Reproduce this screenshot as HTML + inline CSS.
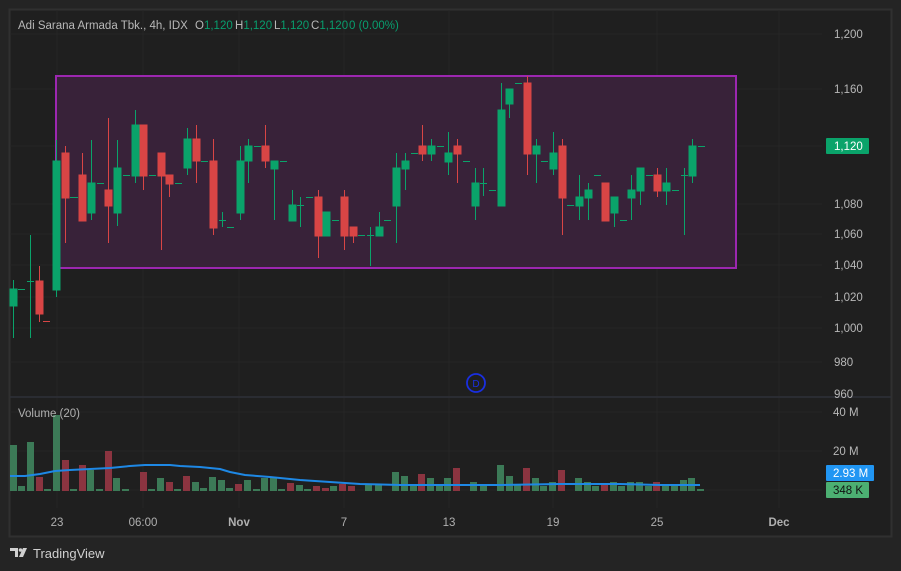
<!DOCTYPE html>
<html><head><meta charset="utf-8"><style>
html,body{margin:0;padding:0;background:#232323;width:901px;height:571px;overflow:hidden;font-family:"Liberation Sans",sans-serif}
svg{position:absolute;left:0;top:0}
</style></head><body>
<svg width="901" height="571" viewBox="0 0 901 571" font-family="Liberation Sans, sans-serif">
<rect x="0" y="0" width="901" height="571" fill="#242424"/>
<rect x="9.5" y="9.5" width="882" height="527" fill="#1f1f1f" stroke="#303030" stroke-width="2"/>
<!-- grid -->
<g stroke="#262626" stroke-width="1">
<line x1="10" y1="34" x2="822" y2="34"/><line x1="10" y1="89" x2="822" y2="89"/><line x1="10" y1="146" x2="822" y2="146"/>
<line x1="10" y1="204" x2="822" y2="204"/><line x1="10" y1="234" x2="822" y2="234"/><line x1="10" y1="265" x2="822" y2="265"/>
<line x1="10" y1="297" x2="822" y2="297"/><line x1="10" y1="328" x2="822" y2="328"/><line x1="10" y1="362" x2="822" y2="362"/>
<line x1="10" y1="412" x2="822" y2="412"/><line x1="10" y1="451" x2="822" y2="451"/><line x1="10" y1="490" x2="822" y2="490"/>
<line x1="57" y1="10" x2="57" y2="508"/><line x1="143" y1="10" x2="143" y2="508"/><line x1="239" y1="10" x2="239" y2="508"/>
<line x1="344" y1="10" x2="344" y2="508"/><line x1="449" y1="10" x2="449" y2="508"/><line x1="553" y1="10" x2="553" y2="508"/>
<line x1="657" y1="10" x2="657" y2="508"/><line x1="779" y1="10" x2="779" y2="508"/>
</g>
<line x1="10" y1="397" x2="891" y2="397" stroke="#2e3038" stroke-width="1.5"/>
<!-- rectangle -->
<rect x="56" y="76" width="680" height="192" fill="#382239" stroke="#9c27b0" stroke-width="2"/>
<!-- header -->
<g font-size="11.5" fill="#b8b8b8">
<text x="18" y="29">Adi Sarana Armada Tbk., 4h, IDX</text>
<text x="195" y="29">O<tspan fill="#089e6e">1,120</tspan></text>
<text x="235" y="29">H<tspan fill="#089e6e">1,120</tspan></text>
<text x="274" y="29">L<tspan fill="#089e6e">1,120</tspan></text>
<text x="311" y="29">C<tspan fill="#089e6e">1,120</tspan></text>
<text x="349" y="29" fill="#089e6e">0 (0.00%)</text>
</g>
<!-- candles -->
<g stroke-width="1">
<g fill="#0aa36a" stroke="#0aa36a">
<line x1="13.5" y1="280" x2="13.5" y2="338"/><rect x="10" y="289" width="7" height="17"/>
<line x1="18" y1="289.5" x2="25" y2="289.5"/>
<line x1="30.5" y1="235" x2="30.5" y2="338"/><line x1="27" y1="281.5" x2="34" y2="281.5"/>
<line x1="56.5" y1="140" x2="56.5" y2="297"/><rect x="53" y="161" width="7" height="129"/>
<line x1="70" y1="197.5" x2="78" y2="197.5"/>
<line x1="91.5" y1="140" x2="91.5" y2="220"/><rect x="88" y="183" width="7" height="30"/>
<line x1="97" y1="183.5" x2="104" y2="183.5"/>
<line x1="117.5" y1="140" x2="117.5" y2="226"/><rect x="114" y="168" width="7" height="45"/>
<line x1="123" y1="175.5" x2="130" y2="175.5"/>
<line x1="135.5" y1="110" x2="135.5" y2="183"/><rect x="132" y="125" width="7" height="51"/>
<line x1="149" y1="175.5" x2="156" y2="175.5"/>
<line x1="175" y1="183.5" x2="182" y2="183.5"/>
<line x1="187.5" y1="128" x2="187.5" y2="175"/><rect x="184" y="139" width="7" height="29"/>
<line x1="201" y1="161.5" x2="208" y2="161.5"/>
<line x1="222.5" y1="212" x2="222.5" y2="227"/><line x1="219" y1="220.5" x2="226" y2="220.5"/>
<line x1="227" y1="227.5" x2="234" y2="227.5"/>
<line x1="240.5" y1="146" x2="240.5" y2="220"/><rect x="237" y="161" width="7" height="52"/>
<line x1="248.5" y1="139" x2="248.5" y2="183"/><rect x="245" y="146" width="7" height="15"/>
<line x1="254" y1="146.5" x2="261" y2="146.5"/>
<line x1="274.5" y1="161" x2="274.5" y2="220"/><rect x="271" y="161" width="7" height="8"/>
<line x1="280" y1="161.5" x2="287" y2="161.5"/>
<line x1="292.5" y1="190" x2="292.5" y2="221"/><rect x="289" y="205" width="7" height="16"/>
<line x1="300.5" y1="197" x2="300.5" y2="227"/><line x1="297" y1="205.5" x2="304" y2="205.5"/>
<line x1="306" y1="197.5" x2="313" y2="197.5"/>
<line x1="326.5" y1="212" x2="326.5" y2="236"/><rect x="323" y="212" width="7" height="24"/>
<line x1="332" y1="220.5" x2="339" y2="220.5"/>
<line x1="358" y1="235.5" x2="365" y2="235.5"/>
<line x1="370.5" y1="227" x2="370.5" y2="266"/><line x1="367" y1="235.5" x2="374" y2="235.5"/>
<line x1="379.5" y1="212" x2="379.5" y2="236"/><rect x="376" y="227" width="7" height="9"/>
<line x1="384" y1="220.5" x2="391" y2="220.5"/>
<line x1="396.5" y1="153" x2="396.5" y2="243"/><rect x="393" y="168" width="7" height="38"/>
<line x1="405.5" y1="153" x2="405.5" y2="190"/><rect x="402" y="161" width="7" height="8"/>
<line x1="411" y1="153.5" x2="418" y2="153.5"/>
<line x1="431.5" y1="139" x2="431.5" y2="161"/><rect x="428" y="146" width="7" height="8"/>
<line x1="437" y1="146.5" x2="444" y2="146.5"/>
<line x1="448.5" y1="132" x2="448.5" y2="175"/><rect x="445" y="153" width="7" height="9"/>
<line x1="463" y1="161.5" x2="470" y2="161.5"/>
<line x1="475.5" y1="168" x2="475.5" y2="220"/><rect x="472" y="183" width="7" height="23"/>
<line x1="483.5" y1="168" x2="483.5" y2="196"/><line x1="480" y1="183.5" x2="487" y2="183.5"/>
<line x1="489" y1="190.5" x2="496" y2="190.5"/>
<line x1="501.5" y1="83" x2="501.5" y2="206"/><rect x="498" y="110" width="7" height="96"/>
<line x1="509.5" y1="89" x2="509.5" y2="118"/><rect x="506" y="89" width="7" height="15"/>
<line x1="515" y1="83.5" x2="522" y2="83.5"/>
<line x1="536.5" y1="139" x2="536.5" y2="183"/><rect x="533" y="146" width="7" height="8"/>
<line x1="541" y1="161.5" x2="548" y2="161.5"/>
<line x1="553.5" y1="132" x2="553.5" y2="175"/><rect x="550" y="153" width="7" height="16"/>
<line x1="567" y1="205.5" x2="574" y2="205.5"/>
<line x1="579.5" y1="175" x2="579.5" y2="220"/><rect x="576" y="197" width="7" height="9"/>
<line x1="588.5" y1="183" x2="588.5" y2="220"/><rect x="585" y="190" width="7" height="8"/>
<line x1="594" y1="175.5" x2="601" y2="175.5"/>
<line x1="614.5" y1="197" x2="614.5" y2="227"/><rect x="611" y="197" width="7" height="16"/>
<line x1="620" y1="220.5" x2="627" y2="220.5"/>
<line x1="631.5" y1="175" x2="631.5" y2="220"/><rect x="628" y="190" width="7" height="8"/>
<line x1="640.5" y1="168" x2="640.5" y2="205"/><rect x="637" y="168" width="7" height="23"/>
<line x1="646" y1="175.5" x2="653" y2="175.5"/>
<line x1="666.5" y1="168" x2="666.5" y2="205"/><rect x="663" y="183" width="7" height="8"/>
<line x1="672" y1="190.5" x2="679" y2="190.5"/>
<line x1="684.5" y1="168" x2="684.5" y2="235"/><line x1="681" y1="175.5" x2="688" y2="175.5"/>
<line x1="692.5" y1="139" x2="692.5" y2="183"/><rect x="689" y="146" width="7" height="30"/>
<line x1="698" y1="146.5" x2="705" y2="146.5"/>
</g>
<g fill="#d84545" stroke="#d84545">
<line x1="39.5" y1="266" x2="39.5" y2="322"/><rect x="36" y="281" width="7" height="33"/>
<line x1="43" y1="321.5" x2="50" y2="321.5"/>
<line x1="65.5" y1="146" x2="65.5" y2="243"/><rect x="62" y="153" width="7" height="45"/>
<line x1="82.5" y1="153" x2="82.5" y2="221"/><rect x="79" y="175" width="7" height="46"/>
<line x1="108.5" y1="118" x2="108.5" y2="243"/><rect x="105" y="190" width="7" height="16"/>
<line x1="143.5" y1="125" x2="143.5" y2="190"/><rect x="140" y="125" width="7" height="51"/>
<line x1="161.5" y1="153" x2="161.5" y2="250"/><rect x="158" y="153" width="7" height="23"/>
<line x1="169.5" y1="175" x2="169.5" y2="197"/><rect x="166" y="175" width="7" height="9"/>
<line x1="196.5" y1="125" x2="196.5" y2="183"/><rect x="193" y="139" width="7" height="22"/>
<line x1="213.5" y1="139" x2="213.5" y2="235"/><rect x="210" y="161" width="7" height="67"/>
<line x1="265.5" y1="125" x2="265.5" y2="168"/><rect x="262" y="146" width="7" height="15"/>
<line x1="318.5" y1="190" x2="318.5" y2="258"/><rect x="315" y="197" width="7" height="39"/>
<line x1="344.5" y1="190" x2="344.5" y2="250"/><rect x="341" y="197" width="7" height="39"/>
<line x1="353.5" y1="227" x2="353.5" y2="243"/><rect x="350" y="227" width="7" height="9"/>
<line x1="422.5" y1="125" x2="422.5" y2="161"/><rect x="419" y="146" width="7" height="8"/>
<line x1="457.5" y1="139" x2="457.5" y2="183"/><rect x="454" y="146" width="7" height="8"/>
<line x1="527.5" y1="76" x2="527.5" y2="175"/><rect x="524" y="83" width="7" height="71"/>
<line x1="562.5" y1="139" x2="562.5" y2="235"/><rect x="559" y="146" width="7" height="52"/>
<line x1="605.5" y1="183" x2="605.5" y2="221"/><rect x="602" y="183" width="7" height="38"/>
<line x1="657.5" y1="168" x2="657.5" y2="197"/><rect x="654" y="175" width="7" height="16"/>
</g>
</g>
<circle cx="476" cy="383" r="9" fill="none" stroke="#1a2fe0" stroke-width="1.8"/>
<text x="476" y="387" font-size="10" fill="#1a2fe0" text-anchor="middle">D</text>
<!-- volume -->
<g fill="#3c7a57">
<rect x="10" y="445" width="7" height="46"/><rect x="18" y="486" width="7" height="5"/><rect x="27" y="442" width="7" height="49"/>
<rect x="44" y="489" width="7" height="2"/><rect x="53" y="415" width="7" height="76"/><rect x="70" y="489" width="7" height="2"/>
<rect x="87" y="470" width="7" height="21"/><rect x="96" y="489" width="7" height="2"/><rect x="113" y="478" width="7" height="13"/>
<rect x="122" y="489" width="7" height="2"/><rect x="148" y="489" width="7" height="2"/><rect x="157" y="478" width="7" height="13"/>
<rect x="174" y="489" width="7" height="2"/><rect x="192" y="482" width="7" height="9"/><rect x="200" y="488" width="7" height="3"/>
<rect x="209" y="477" width="7" height="14"/><rect x="218" y="480" width="7" height="11"/><rect x="226" y="488" width="7" height="3"/>
<rect x="244" y="480" width="7" height="11"/><rect x="253" y="489" width="7" height="2"/><rect x="261" y="478" width="7" height="13"/>
<rect x="270" y="478" width="7" height="13"/><rect x="278" y="489" width="7" height="2"/><rect x="296" y="485" width="7" height="6"/>
<rect x="304" y="489" width="7" height="2"/><rect x="330" y="486" width="7" height="5"/><rect x="365" y="484" width="7" height="7"/>
<rect x="375" y="485" width="7" height="6"/><rect x="392" y="472" width="7" height="19"/><rect x="401" y="476" width="7" height="15"/>
<rect x="410" y="486" width="7" height="5"/><rect x="427" y="478" width="7" height="13"/><rect x="436" y="484" width="7" height="7"/>
<rect x="444" y="478" width="7" height="13"/><rect x="470" y="482" width="7" height="9"/><rect x="480" y="484" width="7" height="7"/>
<rect x="497" y="465" width="7" height="26"/><rect x="506" y="476" width="7" height="15"/><rect x="514" y="485" width="7" height="6"/>
<rect x="532" y="478" width="7" height="13"/><rect x="540" y="486" width="7" height="5"/><rect x="549" y="482" width="7" height="9"/>
<rect x="575" y="478" width="7" height="13"/><rect x="584" y="482" width="7" height="9"/><rect x="592" y="486" width="7" height="5"/>
<rect x="610" y="482" width="7" height="9"/><rect x="618" y="486" width="7" height="5"/><rect x="627" y="482" width="7" height="9"/>
<rect x="636" y="482" width="7" height="9"/><rect x="645" y="486" width="7" height="5"/><rect x="662" y="484" width="7" height="7"/>
<rect x="671" y="486" width="7" height="5"/><rect x="680" y="480" width="7" height="11"/><rect x="688" y="478" width="7" height="13"/>
<rect x="697" y="489" width="7" height="2"/>
</g>
<g fill="#8b3440">
<rect x="36" y="477" width="7" height="14"/><rect x="62" y="460" width="7" height="31"/><rect x="79" y="465" width="7" height="26"/>
<rect x="105" y="451" width="7" height="40"/><rect x="140" y="472" width="7" height="19"/><rect x="166" y="482" width="7" height="9"/>
<rect x="183" y="476" width="7" height="15"/><rect x="235" y="484" width="7" height="7"/><rect x="287" y="483" width="7" height="8"/>
<rect x="313" y="486" width="7" height="5"/><rect x="322" y="488" width="7" height="3"/><rect x="339" y="484" width="7" height="7"/>
<rect x="348" y="486" width="7" height="5"/><rect x="418" y="474" width="7" height="17"/><rect x="453" y="468" width="7" height="23"/>
<rect x="523" y="468" width="7" height="23"/><rect x="558" y="470" width="7" height="21"/><rect x="601" y="484" width="7" height="7"/>
<rect x="653" y="482" width="7" height="9"/>
</g>
<polyline fill="none" stroke="#1e88e5" stroke-width="2" points="10,476 25,476 40,474 55,471 70,470 90,469 110,468 130,466 145,465 160,465 170,465 180,466 200,467 220,469 230,472 245,475 270,477 300,480 330,482 360,484 400,485 450,485 500,485 560,484 620,484 660,485 700,485"/>
<text x="18" y="417" font-size="11.5" fill="#b0b0b0">Volume (20)</text>
<!-- right axis -->
<g font-size="11.5" fill="#b8b8b8" text-anchor="start">
<text x="834" y="38">1,200</text><text x="834" y="93">1,160</text><text x="834" y="208">1,080</text>
<text x="834" y="238">1,060</text><text x="834" y="269">1,040</text><text x="834" y="301">1,020</text>
<text x="834" y="332">1,000</text><text x="834" y="366">980</text><text x="834" y="398">960</text>
<text x="833" y="416">40 M</text><text x="833" y="455">20 M</text>
</g>
<rect x="826" y="138" width="43" height="16" fill="#0aa36a" rx="1"/>
<text x="834" y="150" font-size="11.5" fill="#fff">1,120</text>
<rect x="826" y="465" width="48" height="16" fill="#2196f3" rx="1"/>
<text x="833" y="477" font-size="11.5" fill="#fff">2.93 M</text>
<rect x="826" y="482" width="43" height="16" fill="#4caf72" rx="1"/>
<text x="833" y="494" font-size="11.5" fill="#111">348 K</text>
<!-- time axis -->
<g font-size="11.5" fill="#b0b0b0" text-anchor="middle">
<text x="57" y="526">23</text><text x="143" y="526">06:00</text><text x="239" y="526" font-weight="bold">Nov</text>
<text x="344" y="526">7</text><text x="449" y="526">13</text><text x="553" y="526">19</text><text x="657" y="526">25</text>
<text x="779" y="526" font-weight="bold">Dec</text>
</g>
<!-- logo -->
<g fill="#d0d0d0">
<path d="M10 548h8v9h-3v-6h-5z"/><circle cx="20.5" cy="550" r="1.8"/><path d="M23 548h4l-4 9h-4z"/>
</g>
<text x="33" y="558" font-size="13" fill="#d0d0d0">TradingView</text>
</svg>
</body></html>
